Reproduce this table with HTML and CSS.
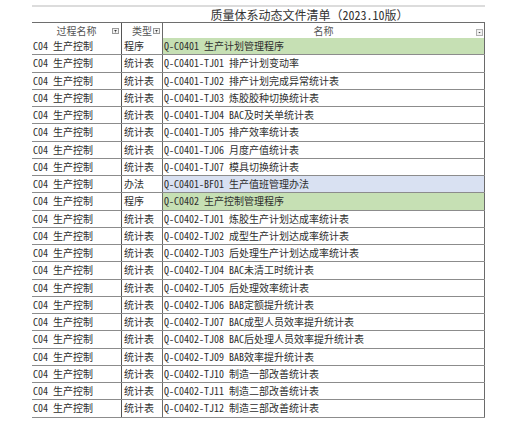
FILE: index.html
```html
<!DOCTYPE html>
<html lang="zh-CN">
<head>
<meta charset="utf-8">
<title>质量体系动态文件清单</title>
<link rel="stylesheet" href="styles.css">
</head>
<body>
<div class="sheet">
  <div class="topbar"></div>
  <div class="title">质量体系动态文件清单（2023.10版）</div>
  <div class="row head">
    <div class="c c1">过程名称<span class="fbtn"><svg width="7" height="6" viewBox="0 0 7 6"><rect x="0.5" y="0.5" width="6" height="5" fill="#f2f2f2" stroke="#9a9a9a"/><path d="M2 2h3L3.5 3.6z M3.2 3.4v1.2h0.6v-1.2z" fill="#333"/></svg></span></div>
    <div class="c c2">类型<span class="fbtn"><svg width="7" height="6" viewBox="0 0 7 6"><rect x="0.5" y="0.5" width="6" height="5" fill="#f2f2f2" stroke="#9a9a9a"/><path d="M2 2h3L3.5 3.6z M3.2 3.4v1.2h0.6v-1.2z" fill="#333"/></svg></span></div>
    <div class="c c3">名称<span class="fbtn f3"><svg width="7" height="7" viewBox="0 0 7 7"><rect x="0.5" y="0.5" width="6" height="6" fill="#f2f2f2" stroke="#b0b0b0"/><path d="M2.3 3h2.4L3.5 4.3z" fill="#444"/></svg></span></div>
  </div>
  <div class="row"><div class="c c1">C04 生产控制</div><div class="c c2">程序</div><div class="c c3 green">Q-C0401 生产计划管理程序</div></div>
  <div class="row"><div class="c c1">C04 生产控制</div><div class="c c2">统计表</div><div class="c c3">Q-C0401-TJ01 排产计划变动率</div></div>
  <div class="row"><div class="c c1">C04 生产控制</div><div class="c c2">统计表</div><div class="c c3">Q-C0401-TJ02 排产计划完成异常统计表</div></div>
  <div class="row"><div class="c c1">C04 生产控制</div><div class="c c2">统计表</div><div class="c c3">Q-C0401-TJ03 炼胶胶种切换统计表</div></div>
  <div class="row"><div class="c c1">C04 生产控制</div><div class="c c2">统计表</div><div class="c c3">Q-C0401-TJ04 BAC及时关单统计表</div></div>
  <div class="row"><div class="c c1">C04 生产控制</div><div class="c c2">统计表</div><div class="c c3">Q-C0401-TJ05 排产效率统计表</div></div>
  <div class="row"><div class="c c1">C04 生产控制</div><div class="c c2">统计表</div><div class="c c3">Q-C0401-TJ06 月度产值统计表</div></div>
  <div class="row"><div class="c c1">C04 生产控制</div><div class="c c2">统计表</div><div class="c c3">Q-C0401-TJ07 模具切换统计表</div></div>
  <div class="row"><div class="c c1">C04 生产控制</div><div class="c c2">办法</div><div class="c c3 blue">Q-C0401-BF01 生产值班管理办法</div></div>
  <div class="row"><div class="c c1">C04 生产控制</div><div class="c c2">程序</div><div class="c c3 green">Q-C0402 生产控制管理程序</div></div>
  <div class="row"><div class="c c1">C04 生产控制</div><div class="c c2">统计表</div><div class="c c3">Q-C0402-TJ01 炼胶生产计划达成率统计表</div></div>
  <div class="row"><div class="c c1">C04 生产控制</div><div class="c c2">统计表</div><div class="c c3">Q-C0402-TJ02 成型生产计划达成率统计表</div></div>
  <div class="row"><div class="c c1">C04 生产控制</div><div class="c c2">统计表</div><div class="c c3">Q-C0402-TJ03 后处理生产计划达成率统计表</div></div>
  <div class="row"><div class="c c1">C04 生产控制</div><div class="c c2">统计表</div><div class="c c3">Q-C0402-TJ04 BAC未清工时统计表</div></div>
  <div class="row"><div class="c c1">C04 生产控制</div><div class="c c2">统计表</div><div class="c c3">Q-C0402-TJ05 后处理效率统计表</div></div>
  <div class="row"><div class="c c1">C04 生产控制</div><div class="c c2">统计表</div><div class="c c3">Q-C0402-TJ06 BAB定额提升统计表</div></div>
  <div class="row"><div class="c c1">C04 生产控制</div><div class="c c2">统计表</div><div class="c c3">Q-C0402-TJ07 BAC成型人员效率提升统计表</div></div>
  <div class="row"><div class="c c1">C04 生产控制</div><div class="c c2">统计表</div><div class="c c3">Q-C0402-TJ08 BAC后处理人员效率提升统计表</div></div>
  <div class="row"><div class="c c1">C04 生产控制</div><div class="c c2">统计表</div><div class="c c3">Q-C0402-TJ09 BAB效率提升统计表</div></div>
  <div class="row"><div class="c c1">C04 生产控制</div><div class="c c2">统计表</div><div class="c c3">Q-C0402-TJ10 制造一部改善统计表</div></div>
  <div class="row"><div class="c c1">C04 生产控制</div><div class="c c2">统计表</div><div class="c c3">Q-C0402-TJ11 制造二部改善统计表</div></div>
  <div class="row"><div class="c c1">C04 生产控制</div><div class="c c2">统计表</div><div class="c c3">Q-C0402-TJ12 制造三部改善统计表</div></div>
</div>
</body>
</html>
```
FILE: styles.css
```css
html, body {
  margin: 0;
  padding: 0;
  background: #fff;
}
.sheet {
  margin: 5px 0 0 32px;
  width: 453px;
  font-family: "Noto Sans Mono CJK SC", "Noto Sans CJK SC", sans-serif;
  font-size: 10px;
  color: #2e2e2e;
}
.topbar {
  height: 2px;
  background: #dcdcdc;
}
.title {
  height: 15px;
  line-height: 15px;
  font-size: 12px;
  color: #333;
  text-align: center;
  padding-left: 102px;
  white-space: nowrap;
}
.row {
  display: grid;
  grid-template-columns: 89px 41px 323px;
  height: 17.25px;
  box-sizing: border-box;
  border-bottom: 1px solid #8c8c8c;
}
.row.head {
  height: 16px;
  border-top: 1px solid #6e6e6e;
  border-bottom: none;
  color: #555;
}
.c {
  display: flex;
  align-items: center;
  padding-left: 1px;
  white-space: nowrap;
  overflow: hidden;
  position: relative;
  line-height: 1;
}
.c2 {
  border-left: 1px solid #555;
  padding-left: 2px;
}
.c3 {
  border-left: 1px solid #6a6a6a;
  border-right: 1px solid #6a6a6a;
  padding-left: 1px;
}
.head .c {
  justify-content: center;
  padding-left: 0;
}
.fbtn {
  position: absolute;
  right: 2px;
  top: 5px;
  display: flex;
  line-height: 0;
}
.fbtn.f3 {
  right: 1px;
  top: 6px;
}
.green {
  background: #c6e0b4;
}
.blue {
  background: #d9e1f2;
}
```
